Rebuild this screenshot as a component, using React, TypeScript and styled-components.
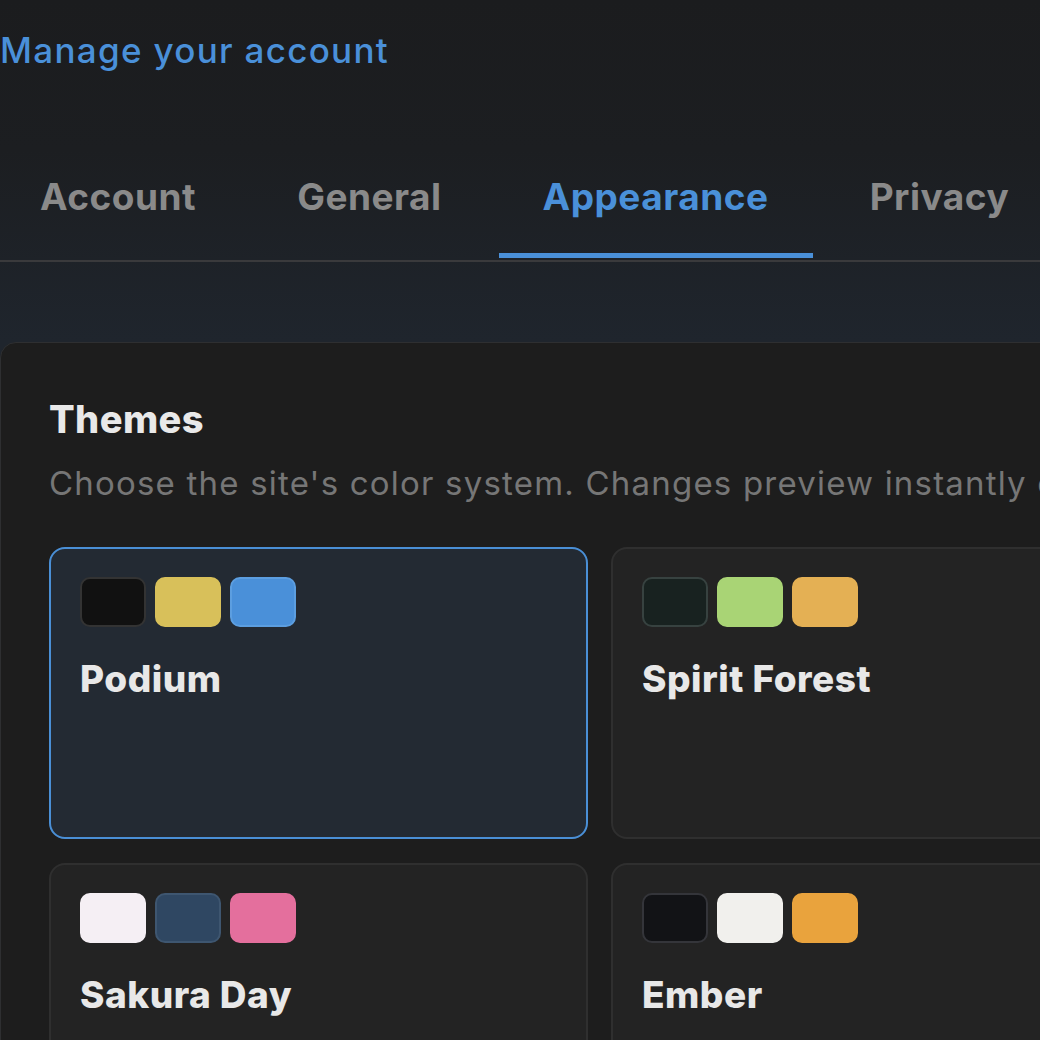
import React from "react";
import styled, { createGlobalStyle } from "styled-components";

const Global = createGlobalStyle`
  html, body { margin: 0; padding: 0; background: #1b1c1e; overflow: hidden; }
  body { font-family: Inter, "Noto Sans", sans-serif; }
`;

const Page = styled.div`
  width: 1040px;
  height: 1040px;
  overflow: hidden;
  background: linear-gradient(180deg, #1b1c1e 0px, #1c1e21 150px, #1f252d 340px, #1f252d 100%);
`;

const Header = styled.h1`
  margin: 0;
  padding: 28px 0 0 0;
  height: 140px;
  box-sizing: border-box;
  font-size: 35px;
  font-weight: 500;
  color: #4a90d9;
  line-height: 44px;
  letter-spacing: 1.3px;
`;

const TabBar = styled.div`
  display: flex;
  gap: 13px;
  margin-left: -4px;
  width: 1200px;
  border-bottom: 2px solid #3a3a3c;
  height: 122px;
  box-sizing: border-box;
`;

const Tab = styled.div<{ $active?: boolean }>`
  padding: 0 44px;
  display: flex;
  align-items: center;
  font-size: 37px;
  font-weight: 700;
  letter-spacing: 0.5px;
  color: ${(p) => (p.$active ? "#4a90d9" : "#8a8a8a")};
  height: 118px;
  margin-bottom: -2px;
  border-bottom: 5px solid ${(p) => (p.$active ? "#4a90d9" : "transparent")};
  box-sizing: border-box;
  line-height: 1;
  white-space: nowrap;
`;

const Spacer = styled.div`
  height: 80px;
`;

const Panel = styled.section`
  width: 1250px;
  min-height: 800px;
  background: #1d1d1d;
  border: 1px solid #2e2f31;
  border-top-left-radius: 16px;
  padding: 48px 48px;
  box-sizing: border-box;
`;

const Title = styled.h2`
  margin: 6px 0 0 0;
  font-size: 38px;
  font-weight: 800;
  letter-spacing: 0.4px;
  color: #e9e9e9;
  line-height: 44px;
`;

const Subtitle = styled.p`
  margin: 22px 0 0 0;
  font-size: 33px;
  letter-spacing: 1.2px;
  color: #767676;
  line-height: 40px;
  white-space: nowrap;
`;

const Grid = styled.div`
  margin-top: 44px;
  display: grid;
  grid-template-columns: 539px 539px;
  gap: 24px 23px;
`;

const Card = styled.div<{ $active?: boolean }>`
  height: 292px;
  box-sizing: border-box;
  border-radius: 16px;
  border: 2px solid ${(p) => (p.$active ? "#4a8fd6" : "#2f2f2f")};
  background: ${(p) => (p.$active ? "#232a33" : "#232323")};
  padding: 28px 29px;
  display: flex;
  flex-direction: column;
  gap: 30px;
`;

const Swatches = styled.div`
  display: flex;
  gap: 9px;
`;

const Swatch = styled.div<{ $c: string; $b: string }>`
  width: 66px;
  height: 50px;
  box-sizing: border-box;
  border-radius: 10px;
  background: ${(p) => p.$c};
  border: 2px solid ${(p) => p.$b};
`;

const Name = styled.div`
  font-size: 37px;
  font-weight: 800;
  letter-spacing: 0.5px;
  color: #e8e8e8;
  line-height: 44px;
`;

const themes = [
  {
    name: "Podium",
    active: true,
    colors: [
      ["#111111", "#333333"],
      ["#d8c05a", "#d8c05a"],
      ["#4a90d9", "#5c9ee0"],
    ],
  },
  {
    name: "Spirit Forest",
    colors: [
      ["#182220", "#374240"],
      ["#a9d475", "#a9d475"],
      ["#e4b054", "#e4b054"],
    ],
  },
  {
    name: "Sakura Day",
    colors: [
      ["#f5eff4", "#f5eff4"],
      ["#2f4762", "#3e5670"],
      ["#e46f9d", "#e46f9d"],
    ],
  },
  {
    name: "Ember",
    colors: [
      ["#121316", "#34353a"],
      ["#f1f0ed", "#f1f0ed"],
      ["#e9a33d", "#e9a33d"],
    ],
  },
];

export default function App() {
  return (
    <Page>
      <Global />
      <Header>Manage your account</Header>
      <TabBar>
        <Tab>Account</Tab>
        <Tab>General</Tab>
        <Tab $active>Appearance</Tab>
        <Tab>Privacy</Tab>
      </TabBar>
      <Spacer />
      <Panel>
        <Title>Themes</Title>
        <Subtitle>
          Choose the site's color system. Changes preview instantly on this device.
        </Subtitle>
        <Grid>
          {themes.map((t) => (
            <Card key={t.name} $active={t.active}>
              <Swatches>
                {t.colors.map(([c, b], i) => (
                  <Swatch key={i} $c={c} $b={b} />
                ))}
              </Swatches>
              <Name>{t.name}</Name>
            </Card>
          ))}
        </Grid>
      </Panel>
    </Page>
  );
}
